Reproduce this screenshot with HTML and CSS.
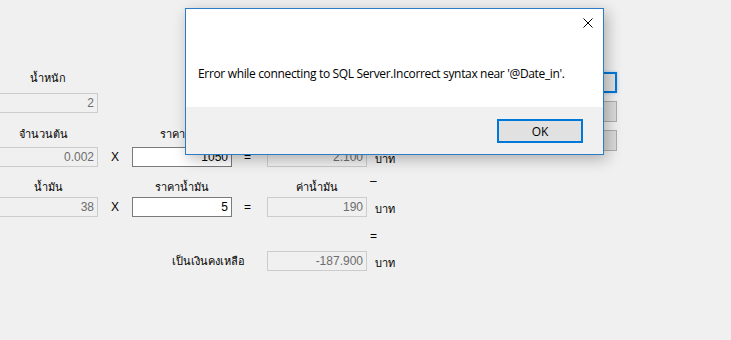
FILE: index.html
```html
<!DOCTYPE html>
<html lang="th">
<head>
    <meta charset="UTF-8">
    <meta name="viewport" content="width=device-width, initial-scale=1.0">
    <title>คำนวณค่าอ้อย</title>
    <link rel="stylesheet" href="styles.css">
</head>
<body>
    <div class="screen">
        <div class="form">
            <div class="lbl r1 c1 mb7">น้ำหนัก</div>
            <div class="tb off r2 c1">2</div>

            <div class="lbl count r3 c1 mb5">จำนวนต้น</div>
            <div class="lbl r3 c3 mb5">ราคาอ้อย</div>
            <div class="lbl r3 c5 mb5">ค่าอ้อย</div>
            <div class="tb off r4 c1">0.002</div>
            <div class="op r4 c2">X</div>
            <div class="tb r4 c3">1050</div>
            <div class="op r4 c4">=</div>
            <div class="tb off r4 c5">2.100</div>
            <div class="unit r4 c6">บาท</div>

            <div class="lbl r5 c1 mb2">น้ำมัน</div>
            <div class="lbl r5 c3 mb2">ราคาน้ำมัน</div>
            <div class="lbl r5 c5 mb2">ค่าน้ำมัน</div>
            <div class="sign minus r5 c6">–</div>
            <div class="tb off r6 c1">38</div>
            <div class="op r6 c2">X</div>
            <div class="tb r6 c3">5</div>
            <div class="op r6 c4">=</div>
            <div class="tb off r6 c5">190</div>
            <div class="unit r6 c6">บาท</div>

            <div class="sign r7 c6 mb7">=</div>
            <div class="lbl total r8 c34">เป็นเงินคงเหลือ</div>
            <div class="tb off r8 c5">-187.900</div>
            <div class="unit r8 c6">บาท</div>
        </div>

        <div class="side">
            <div class="btn focused"></div>
            <div class="btn"></div>
            <div class="btn"></div>
        </div>

        <div class="dialog">
            <div class="dialog-body">
                <button class="close" aria-label="close">
                    <svg width="10" height="10" viewBox="0 0 10 10">
                        <path d="M0.5 0.5 L9.5 9.5 M9.5 0.5 L0.5 9.5" stroke="#000" stroke-width="1" fill="none"/>
                    </svg>
                </button>
                <p class="message">Error while connecting to SQL Server.Incorrect syntax near '@Date_in'.</p>
            </div>
            <div class="dialog-foot">
                <button class="ok">OK</button>
            </div>
        </div>
    </div>
</body>
</html>
```

FILE: styles.css
```css
body {
    margin: 0;
    background-color: #f0f0f0;
    font-family: "Liberation Sans", Arial, sans-serif;
    font-size: 11px;
    color: #000;
    overflow: hidden;
}
.screen {
    position: relative;
    display: flex;
    width: 731px;
    height: 340px;
}
.form {
    display: grid;
    grid-template-columns: 100px 34px 100px 35px 100px 40px;
    grid-template-rows: 23px 20px 34px 20px 30px 20px 34px 20px;
    padding-top: 70px;
    margin-left: -2px;
}
.r1 { grid-row: 1; }
.r2 { grid-row: 2; }
.r3 { grid-row: 3; }
.r4 { grid-row: 4; }
.r5 { grid-row: 5; }
.r6 { grid-row: 6; }
.r7 { grid-row: 7; }
.r8 { grid-row: 8; }
.c1 { grid-column: 1; }
.c2 { grid-column: 2; }
.c3 { grid-column: 3; }
.c4 { grid-column: 4; }
.c5 { grid-column: 5; }
.c6 { grid-column: 6; }
.c34 { grid-column: 3 / 5; }

.lbl {
    align-self: end;
    height: 16px;
    line-height: 16px;
    text-align: center;
    white-space: nowrap;
}
.lbl.count {
    padding-right: 10px;
}
.mb7 { margin-bottom: 7px; }
.mb5 { margin-bottom: 5px; }
.mb2 { margin-bottom: 2px; }
.lbl.total {
    align-self: center;
    text-align: right;
    padding-right: 22px;
}
.tb {
    box-sizing: border-box;
    height: 20px;
    border: 1px solid #7a7a7a;
    background-color: #fff;
    text-align: right;
    padding-right: 3px;
    line-height: 18px;
    font-size: 12px;
}
.tb.off {
    border-color: #cccccc;
    background-color: #f0f0f0;
    color: #6d6d6d;
}
.op {
    align-self: center;
    text-align: center;
    font-size: 12px;
    line-height: 16px;
}
.c4.op {
    padding-right: 4px;
}
.unit {
    align-self: center;
    padding-left: 8px;
    margin-top: 3px;
    line-height: 16px;
}
.sign {
    align-self: end;
    height: 16px;
    line-height: 16px;
    padding-left: 3px;
    font-size: 12px;
}
.sign.minus {
    align-self: start;
    margin-top: 6px;
}

.side {
    display: flex;
    flex-direction: column;
    gap: 8px;
    padding-top: 72px;
    margin-left: 135px;
}
.btn {
    box-sizing: border-box;
    width: 75px;
    height: 21px;
    border: 1px solid #adadad;
    background-color: #dadada;
}
.btn.focused {
    border: 2px solid #0078d7;
    background-color: #e1e1e1;
    box-shadow: 0 0 3px rgba(0, 120, 215, 0.3);
}

.dialog {
    position: absolute;
    left: 185px;
    top: 8px;
    width: 419px;
    height: 147px;
    box-sizing: border-box;
    border: 1px solid #2b7bc6;
    background-color: #f0f0f0;
    box-shadow: 3px 4px 14px rgba(0, 0, 0, 0.28);
    font-family: "Open Sans", "Noto Sans", sans-serif;
    font-size: 12px;
    display: flex;
    flex-direction: column;
}
.dialog-body {
    position: relative;
    height: 98px;
    background-color: #fff;
    padding: 0 12px;
    display: flex;
    align-items: center;
}
.message {
    margin: 0;
    padding-top: 30px;
    white-space: nowrap;
    letter-spacing: -0.34px;
}
.close {
    position: absolute;
    right: 10px;
    top: 9px;
    width: 10px;
    height: 10px;
    padding: 0;
    border: none;
    background: none;
    display: flex;
}
.dialog-foot {
    flex: 1;
    display: flex;
    justify-content: flex-end;
    padding: 12px 20px 0 0;
}
.ok {
    box-sizing: border-box;
    width: 86px;
    height: 24px;
    border: 2px solid #0078d7;
    background-color: #e1e1e1;
    font-family: "Open Sans", "Noto Sans", sans-serif;
    font-size: 12px;
    color: #000;
    padding: 0;
}
```
